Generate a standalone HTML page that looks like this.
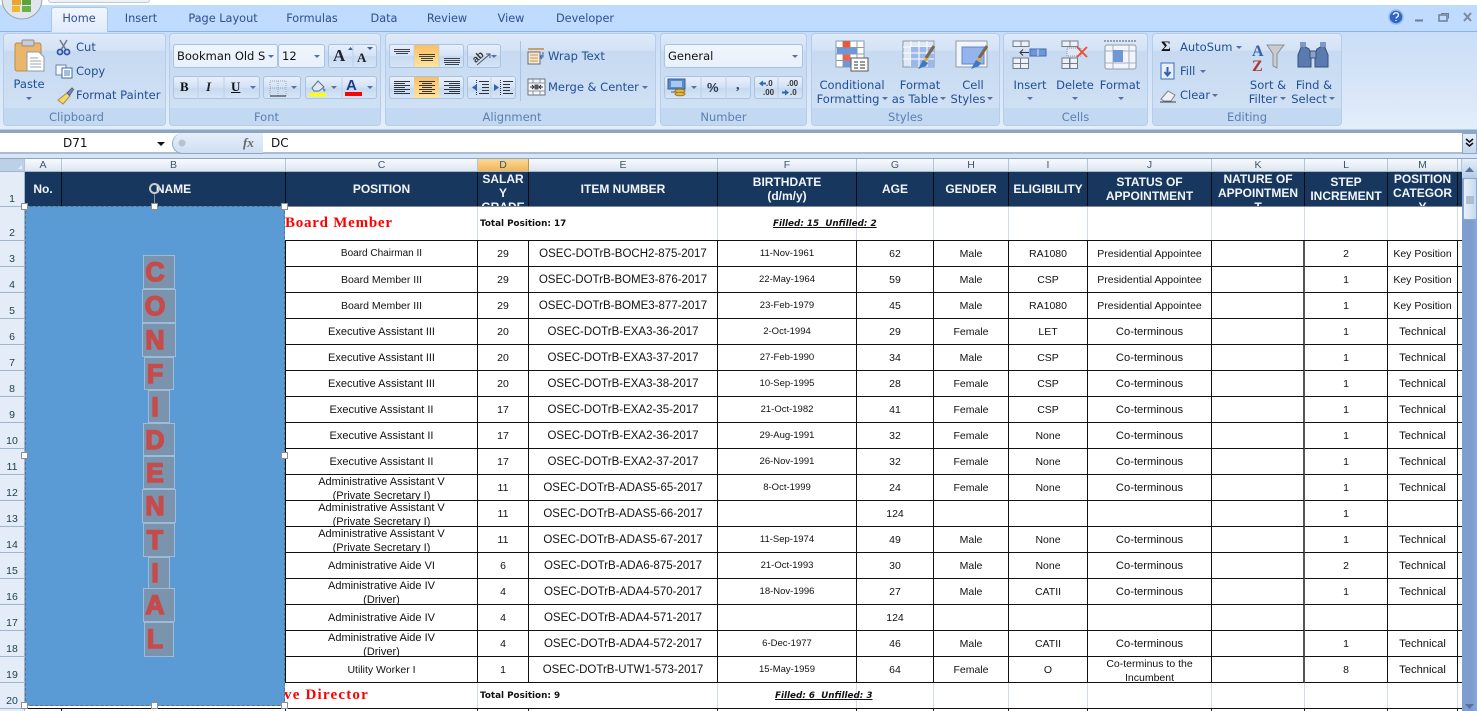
<!DOCTYPE html>
<html><head><meta charset="utf-8"><title>Excel</title>
<style>
*{box-sizing:border-box}
html,body{margin:0;padding:0;width:1477px;height:711px;overflow:hidden;background:#fff;font-family:"Liberation Sans",sans-serif}
.a{position:absolute}
#rb{position:absolute;left:0;top:31px;width:1477px;height:99px;background:linear-gradient(#c9def7,#dbe8f8 70%,#e3eefa);border-top:1px solid #8db2e3;border-bottom:1px solid #b4cbe6}
.g{position:absolute;top:33px;height:93px;border:1px solid #b5cde8;border-radius:4px;background:linear-gradient(#dfeafa 0,#d3e2f5 18%,#c7daf1 19%,#cfe0f4 80%)}
.g:after{content:"";position:absolute;left:0;right:0;bottom:0;height:17px;background:#c2d9f1;border-radius:0 0 3px 3px}
.g span{position:absolute;z-index:2;left:0;right:0;bottom:0;height:17px;text-align:center;font:11.5px/18px "DejaVu Sans",sans-serif;color:#5a7fb0}
.t{position:absolute;font:11.5px/14px "DejaVu Sans",sans-serif;color:#1f4f94;white-space:nowrap}
.c{text-align:center;transform:translateX(-50%)}
.tab{position:absolute;top:12px;font:11.3px/14px "DejaVu Sans",sans-serif;color:#2f4f8f;transform:translateX(-50%);white-space:nowrap}
.bx{position:absolute;border:1px solid #a9c3e2;border-radius:3px;background:linear-gradient(#e8f0fb,#d3e2f5 50%,#c6d9f0 52%,#d6e5f6)}
.w{background:linear-gradient(#f0f5fc,#e8f0fa);}
.hl{position:absolute;background:linear-gradient(#f9bd68,#fdd27f 50%,#ffe49e)}
.cl{position:absolute;top:159px;height:13px;background:linear-gradient(#f8fafd,#dfe6f0);border-right:1px solid #b0c4dc;border-bottom:1px solid #9eb6ce;font:10.5px/13px "Liberation Sans",sans-serif;color:#3e5570;text-align:center}
.rn{position:absolute;left:0;width:25px;background:#e4ecf7;border-bottom:1px solid #9eb6ce;border-right:1px solid #9eb6ce;font:10.5px/14px "Liberation Sans",sans-serif;color:#24404f;text-align:center;display:flex;align-items:flex-end;justify-content:center}
.r{position:absolute;left:285px;display:grid;grid-template-columns:192px 51px 189px 139px 77px 75px 79px 124px 93px 83px 70px 4px;height:26px;border-left:1px solid #111}
.r span{display:flex;align-items:center;justify-content:center;text-align:center;overflow:hidden;height:26px;padding-top:1px;border-right:1px solid #111;border-bottom:1px solid #111;font-size:10.5px;line-height:14px;color:#111;white-space:nowrap}
.r span:nth-child(3){font-size:11.5px}
.r span:nth-child(4){font-size:9.5px}
.r span:nth-child(9){border-right:2px solid #555}
.r span:last-child{border-right:0}
.r span.o{align-items:flex-start;padding-top:0}
.r span.k{font-size:11.2px}
.r span.x{font-size:11px}
.r span.m{font-size:10px}
.hd{position:absolute;top:172px;height:34px;background:#17375e;color:#f2f5f9;font:bold 12px/14px "Liberation Sans",sans-serif;text-align:center;overflow:hidden;border-right:1px solid #060a12;display:flex;align-items:center;justify-content:center;white-space:nowrap}
.hd.o{align-items:flex-start}
.gl{position:absolute;top:207px;width:1px;height:33px;background:#d3dcea}
.tp{position:absolute;font:bold 8.8px/12px "DejaVu Sans",sans-serif;color:#111;white-space:nowrap}
.fl{position:absolute;font:italic bold 8.8px/12px "DejaVu Sans",sans-serif;color:#111;text-decoration:underline;white-space:pre}
.rd{position:absolute;font:bold 15px/18px "Liberation Serif",serif;letter-spacing:.75px;color:#f00;white-space:nowrap}
#sh{position:absolute;left:25px;top:206px;width:260px;height:500px;background:#5b9bd5;border:1px dashed #5a6f88}
.lt{position:absolute;background:#7a94ae;border:1px solid #9dbcdc}
.lg{position:absolute;left:115px;width:80px;text-align:center;font:bold 26.500px/34px "Liberation Sans",sans-serif;color:#c64b4b;-webkit-text-stroke:1.500px #c64b4b}
.hn{position:absolute;width:7px;height:7px;background:#fff;border:1px solid #8a8f96}
</style></head><body>

<!-- title strip + tabs -->
<div class="a" style="left:0;top:5px;width:1477px;height:26px;background:#bfdbff"></div>
<div class="a" style="left:48px;top:0;width:102px;height:3px;background:#eef3fa;border:1px solid #c2c8d0;border-top:0;border-radius:0 0 4px 4px"></div>
<div class="a" style="left:51px;top:7px;width:57px;height:25px;background:linear-gradient(#f2f7fe,#dfeafa);border:1px solid #a9c7ec;border-bottom:0;border-radius:3px 3px 0 0;z-index:3"></div>
<div class="tab" style="left:79px;z-index:4">Home</div>
<div class="tab" style="left:141px">Insert</div>
<div class="tab" style="left:223px">Page Layout</div>
<div class="tab" style="left:312px">Formulas</div>
<div class="tab" style="left:384px">Data</div>
<div class="tab" style="left:447px">Review</div>
<div class="tab" style="left:511px">View</div>
<div class="tab" style="left:585px">Developer</div>

<div id="rb"></div>
<div class="g" style="left:3px;width:163px"><span style="width:145px">Clipboard</span></div>
<div class="g" style="left:169px;width:212px"><span style="width:193px">Font</span></div>
<div class="g" style="left:385px;width:271px"><span style="width:252px">Alignment</span></div>
<div class="g" style="left:660px;width:147px"><span style="width:125px">Number</span></div>
<div class="g" style="left:811px;width:189px"><span>Styles</span></div>
<div class="g" style="left:1003px;width:145px"><span>Cells</span></div>
<div class="g" style="left:1152px;width:190px"><span>Editing</span></div>

<!-- controls -->
<div class="bx w" style="left:173px;top:44px;width:105px;height:24px"></div>
<div class="bx w" style="left:278px;top:44px;width:47px;height:24px"></div>
<div class="bx" style="left:328px;top:44px;width:49px;height:24px"></div>
<div class="bx" style="left:173px;top:76px;width:87px;height:23px"></div>
<div class="bx" style="left:263px;top:76px;width:38px;height:23px"></div>
<div class="bx" style="left:305px;top:76px;width:72px;height:23px"></div>
<div class="bx" style="left:389px;top:44px;width:75px;height:24px"></div>
<div class="hl" style="left:414px;top:45px;width:25px;height:22px"></div>
<div class="bx" style="left:467px;top:44px;width:34px;height:24px"></div>
<div class="bx" style="left:389px;top:76px;width:75px;height:23px"></div>
<div class="hl" style="left:414px;top:77px;width:25px;height:21px"></div>
<div class="bx" style="left:467px;top:76px;width:49px;height:23px"></div>
<div class="a" style="left:520px;top:41px;width:1px;height:60px;background:#a9c3e2"></div>
<div class="bx w" style="left:664px;top:44px;width:139px;height:24px"></div>
<div class="bx" style="left:664px;top:76px;width:87px;height:23px"></div>
<div class="bx" style="left:754px;top:76px;width:49px;height:23px"></div>

<div class="t" style="left:76px;top:40px">Cut</div>
<div class="t" style="left:76px;top:64px">Copy</div>
<div class="t" style="left:76px;top:88px">Format Painter</div>
<div class="t c" style="left:29px;top:77px">Paste</div>
<div class="t" style="left:177px;top:49px;color:#111">Bookman Old S</div>
<div class="t" style="left:282px;top:49px;color:#111">12</div>
<div class="a" style="left:333px;top:46px;font:bold 17px/20px 'Liberation Serif',serif;color:#223">A</div>
<div class="a" style="left:357px;top:49px;font:bold 13px/18px 'Liberation Serif',serif;color:#223">A</div>
<div class="a" style="left:180px;top:79px;font:bold 13px/16px 'Liberation Serif',serif;color:#111">B</div>
<div class="a" style="left:206px;top:79px;font:italic bold 13px/16px 'Liberation Serif',serif;color:#222">I</div>
<div class="a" style="left:231px;top:79px;font:bold 13px/16px 'Liberation Serif',serif;color:#111;text-decoration:underline">U</div>
<div class="a" style="left:346px;top:78px;font:bold 15px/16px 'Liberation Sans',sans-serif;color:#1c3d8f">A</div>
<div class="t" style="left:548px;top:49px">Wrap Text</div>
<div class="t" style="left:548px;top:80px">Merge &amp; Center</div>
<div class="t" style="left:668px;top:49px;color:#111">General</div>
<div class="a" style="left:707px;top:80px;font:bold 13px/16px 'Liberation Sans',sans-serif;color:#2a3a50">%</div>
<div class="a" style="left:736px;top:78px;font:bold 14px/16px 'Liberation Serif',serif;color:#2a3a50">,</div>
<div class="t c" style="left:852px;top:78px">Conditional</div>
<div class="t c" style="left:848px;top:92px">Formatting</div>
<div class="t c" style="left:920px;top:78px">Format</div>
<div class="t c" style="left:915px;top:92px">as Table</div>
<div class="t c" style="left:973px;top:78px">Cell</div>
<div class="t c" style="left:968px;top:92px">Styles</div>
<div class="t c" style="left:1030px;top:78px">Insert</div>
<div class="t c" style="left:1075px;top:78px">Delete</div>
<div class="t c" style="left:1120px;top:78px">Format</div>
<div class="t" style="left:1180px;top:40px">AutoSum</div>
<div class="t" style="left:1180px;top:64px">Fill</div>
<div class="t" style="left:1180px;top:88px">Clear</div>
<div class="t c" style="left:1268px;top:78px">Sort &amp;</div>
<div class="t c" style="left:1263px;top:92px">Filter</div>
<div class="t c" style="left:1314px;top:78px">Find &amp;</div>
<div class="t c" style="left:1309px;top:92px">Select</div>
<div class="a" style="left:1161px;top:38px;font:bold 15px/18px 'Liberation Serif',serif;color:#111">&#931;</div>

<!-- formula bar -->
<div class="a" style="left:0;top:130px;width:1477px;height:3px;background:#8ea6c6"></div>
<div class="a" style="left:0;top:133px;width:1477px;height:21px;background:#fff;border-bottom:2px solid #a9bdd6"></div>
<div class="a" style="left:172px;top:133px;width:91px;height:21px;background:linear-gradient(#e6eff9,#cfdff2);border-radius:11px 0 0 11px;border-left:1px solid #8ea6c6;border-bottom:1px solid #8ea6c6"></div>
<div class="a" style="left:63px;top:136px;font:12px/15px 'DejaVu Sans',sans-serif;color:#111">D71</div>
<div class="a" style="left:271px;top:136px;font:12px/15px 'DejaVu Sans',sans-serif;color:#111">DC</div>
<div class="a" style="left:243px;top:135px;font:italic bold 13px/16px 'Liberation Serif',serif;color:#666">fx</div>
<div class="a" style="left:1462px;top:133px;width:15px;height:21px;background:linear-gradient(#e6eff9,#c3d7ee);border:1px solid #8ea6c6"></div>
<div class="a" style="left:0;top:154px;width:1477px;height:5px;background:#d9e5f4;border-bottom:1px solid #8ea6c6"></div>

<!-- column heads -->
<div class="cl" style="left:0;width:25px;background:#bcd0e8"></div>
<div class="cl" style="left:25px;width:37px">A</div>
<div class="cl" style="left:62px;width:224px">B</div>
<div class="cl" style="left:286px;width:192px">C</div>
<div class="cl" style="left:478px;width:51px;background:linear-gradient(#f9d99a,#f3b654);border-right-color:#c9963e">D</div>
<div class="cl" style="left:529px;width:189px">E</div>
<div class="cl" style="left:718px;width:139px">F</div>
<div class="cl" style="left:857px;width:77px">G</div>
<div class="cl" style="left:934px;width:75px">H</div>
<div class="cl" style="left:1009px;width:79px">I</div>
<div class="cl" style="left:1088px;width:124px">J</div>
<div class="cl" style="left:1212px;width:93px">K</div>
<div class="cl" style="left:1305px;width:83px">L</div>
<div class="cl" style="left:1388px;width:70px">M</div>
<div class="cl" style="left:1458px;width:4px"></div>

<!-- row numbers -->
<div class="rn" style="top:172px;height:35px">1</div>
<div class="rn" style="top:207px;height:34px">2</div>
<div class="rn" style="top:241px;height:26px">3</div>
<div class="rn" style="top:267px;height:26px">4</div>
<div class="rn" style="top:293px;height:26px">5</div>
<div class="rn" style="top:319px;height:26px">6</div>
<div class="rn" style="top:345px;height:26px">7</div>
<div class="rn" style="top:371px;height:26px">8</div>
<div class="rn" style="top:397px;height:26px">9</div>
<div class="rn" style="top:423px;height:26px">10</div>
<div class="rn" style="top:449px;height:26px">11</div>
<div class="rn" style="top:475px;height:26px">12</div>
<div class="rn" style="top:501px;height:26px">13</div>
<div class="rn" style="top:527px;height:26px">14</div>
<div class="rn" style="top:553px;height:26px">15</div>
<div class="rn" style="top:579px;height:26px">16</div>
<div class="rn" style="top:605px;height:26px">17</div>
<div class="rn" style="top:631px;height:26px">18</div>
<div class="rn" style="top:657px;height:26px">19</div>
<div class="rn" style="top:683px;height:26px">20</div>
<div class="rn" style="top:709px;height:2px;border:0;border-right:1px solid #9eb6ce"></div>

<!-- header row -->
<div class="hd" style="left:25px;width:37px">No.</div>
<div class="hd" style="left:62px;width:224px">NAME</div>
<div class="hd" style="left:286px;width:192px">POSITION</div>
<div class="hd o" style="left:478px;width:51px">SALAR<br>Y<br>GRADE</div>
<div class="hd" style="left:529px;width:189px">ITEM NUMBER</div>
<div class="hd" style="left:718px;width:139px">BIRTHDATE<br>(d/m/y)</div>
<div class="hd" style="left:857px;width:77px">AGE</div>
<div class="hd" style="left:934px;width:75px">GENDER</div>
<div class="hd" style="left:1009px;width:79px">ELIGIBILITY</div>
<div class="hd" style="left:1088px;width:124px">STATUS OF<br>APPOINTMENT</div>
<div class="hd o" style="left:1212px;width:93px">NATURE OF<br>APPOINTMEN<br>T</div>
<div class="hd" style="left:1305px;width:83px">STEP<br>INCREMENT</div>
<div class="hd o" style="left:1388px;width:70px">POSITION<br>CATEGOR<br>Y</div>
<div class="hd" style="left:1458px;width:4px;border:0"></div>
<div class="a" style="left:25px;top:206px;width:1437px;height:1px;background:#7f8792"></div>

<!-- row 2 -->
<div class="gl" style="left:477px"></div><div class="gl" style="left:717px"></div><div class="gl" style="left:856px"></div><div class="gl" style="left:933px"></div><div class="gl" style="left:1008px"></div><div class="gl" style="left:1087px"></div><div class="gl" style="left:1211px"></div><div class="gl" style="left:1304px"></div><div class="gl" style="left:1387px"></div><div class="gl" style="left:1457px"></div>
<div class="a" style="left:285px;top:240px;width:1177px;height:1px;background:#111"></div>
<div class="rd" style="left:285px;top:214px">Board Member</div>
<div class="tp" style="left:480px;top:218px">Total Position: 17</div>
<div class="fl" style="left:773px;top:218px">Filled: 15  Unfilled: 2</div>

<!-- data rows -->
<div class="r" style="top:241px"><span class="m">Board Chairman II</span><span>29</span><span>OSEC-DOTrB-BOCH2-875-2017</span><span>11-Nov-1961</span><span>62</span><span>Male</span><span>RA1080</span><span>Presidential Appointee</span><span></span><span>2</span><span>Key Position</span><span></span></div>
<div class="r" style="top:267px"><span>Board Member III</span><span>29</span><span>OSEC-DOTrB-BOME3-876-2017</span><span>22-May-1964</span><span>59</span><span>Male</span><span>CSP</span><span>Presidential Appointee</span><span></span><span>1</span><span>Key Position</span><span></span></div>
<div class="r" style="top:293px"><span>Board Member III</span><span>29</span><span>OSEC-DOTrB-BOME3-877-2017</span><span>23-Feb-1979</span><span>45</span><span>Male</span><span>RA1080</span><span>Presidential Appointee</span><span></span><span>1</span><span>Key Position</span><span></span></div>
<div class="r" style="top:319px"><span class="x">Executive Assistant III</span><span>20</span><span>OSEC-DOTrB-EXA3-36-2017</span><span>2-Oct-1994</span><span>29</span><span>Female</span><span>LET</span><span class="k">Co-terminous</span><span></span><span>1</span><span class="k">Technical</span><span></span></div>
<div class="r" style="top:345px"><span class="x">Executive Assistant III</span><span>20</span><span>OSEC-DOTrB-EXA3-37-2017</span><span>27-Feb-1990</span><span>34</span><span>Male</span><span>CSP</span><span class="k">Co-terminous</span><span></span><span>1</span><span class="k">Technical</span><span></span></div>
<div class="r" style="top:371px"><span class="x">Executive Assistant III</span><span>20</span><span>OSEC-DOTrB-EXA3-38-2017</span><span>10-Sep-1995</span><span>28</span><span>Female</span><span>CSP</span><span class="k">Co-terminous</span><span></span><span>1</span><span class="k">Technical</span><span></span></div>
<div class="r" style="top:397px"><span class="x">Executive Assistant II</span><span>17</span><span>OSEC-DOTrB-EXA2-35-2017</span><span>21-Oct-1982</span><span>41</span><span>Female</span><span>CSP</span><span class="k">Co-terminous</span><span></span><span>1</span><span class="k">Technical</span><span></span></div>
<div class="r" style="top:423px"><span class="x">Executive Assistant II</span><span>17</span><span>OSEC-DOTrB-EXA2-36-2017</span><span>29-Aug-1991</span><span>32</span><span>Female</span><span>None</span><span class="k">Co-terminous</span><span></span><span>1</span><span class="k">Technical</span><span></span></div>
<div class="r" style="top:449px"><span class="x">Executive Assistant II</span><span>17</span><span>OSEC-DOTrB-EXA2-37-2017</span><span>26-Nov-1991</span><span>32</span><span>Female</span><span>None</span><span class="k">Co-terminous</span><span></span><span>1</span><span class="k">Technical</span><span></span></div>
<div class="r" style="top:475px"><span class="o x">Administrative Assistant V<br>(Private Secretary I)</span><span>11</span><span>OSEC-DOTrB-ADAS5-65-2017</span><span>8-Oct-1999</span><span>24</span><span>Female</span><span>None</span><span class="k">Co-terminous</span><span></span><span>1</span><span class="k">Technical</span><span></span></div>
<div class="r" style="top:501px"><span class="o x">Administrative Assistant V<br>(Private Secretary I)</span><span>11</span><span>OSEC-DOTrB-ADAS5-66-2017</span><span></span><span>124</span><span></span><span></span><span></span><span></span><span>1</span><span></span><span></span></div>
<div class="r" style="top:527px"><span class="o x">Administrative Assistant V<br>(Private Secretary I)</span><span>11</span><span>OSEC-DOTrB-ADAS5-67-2017</span><span>11-Sep-1974</span><span>49</span><span>Male</span><span>None</span><span class="k">Co-terminous</span><span></span><span>1</span><span class="k">Technical</span><span></span></div>
<div class="r" style="top:553px"><span class="x">Administrative Aide VI</span><span>6</span><span>OSEC-DOTrB-ADA6-875-2017</span><span>21-Oct-1993</span><span>30</span><span>Male</span><span>None</span><span class="k">Co-terminous</span><span></span><span>2</span><span class="k">Technical</span><span></span></div>
<div class="r" style="top:579px"><span class="o x">Administrative Aide IV<br>(Driver)</span><span>4</span><span>OSEC-DOTrB-ADA4-570-2017</span><span>18-Nov-1996</span><span>27</span><span>Male</span><span>CATII</span><span class="k">Co-terminous</span><span></span><span>1</span><span class="k">Technical</span><span></span></div>
<div class="r" style="top:605px"><span class="x">Administrative Aide IV</span><span>4</span><span>OSEC-DOTrB-ADA4-571-2017</span><span></span><span>124</span><span></span><span></span><span></span><span></span><span></span><span></span><span></span></div>
<div class="r" style="top:631px"><span class="o x">Administrative Aide IV<br>(Driver)</span><span>4</span><span>OSEC-DOTrB-ADA4-572-2017</span><span>6-Dec-1977</span><span>46</span><span>Male</span><span>CATII</span><span class="k">Co-terminous</span><span></span><span>1</span><span class="k">Technical</span><span></span></div>
<div class="r" style="top:657px"><span>Utility Worker I</span><span>1</span><span>OSEC-DOTrB-UTW1-573-2017</span><span>15-May-1959</span><span>64</span><span>Female</span><span>O</span><span class="o">Co-terminus to the<br>Incumbent</span><span></span><span>8</span><span class="k">Technical</span><span></span></div>

<!-- row 20 -->
<div class="gl" style="left:477px;top:683px;height:25px"></div><div class="gl" style="left:717px;top:683px;height:25px"></div><div class="gl" style="left:856px;top:683px;height:25px"></div><div class="gl" style="left:933px;top:683px;height:25px"></div><div class="gl" style="left:1008px;top:683px;height:25px"></div><div class="gl" style="left:1087px;top:683px;height:25px"></div><div class="gl" style="left:1211px;top:683px;height:25px"></div><div class="gl" style="left:1304px;top:683px;height:25px"></div><div class="gl" style="left:1387px;top:683px;height:25px"></div><div class="gl" style="left:1457px;top:683px;height:25px"></div>
<div class="a" style="left:25px;top:708px;width:1437px;height:1px;background:#111"></div>
<div class="rd" style="left:200px;width:169px;text-align:right;top:686px;letter-spacing:1.2px">Executive Director</div>
<div class="tp" style="left:480px;top:690px">Total Position: 9</div>
<div class="fl" style="left:775px;top:690px">Filled: 6  Unfilled: 3</div>
<div class="a" style="left:61px;top:709px;width:1px;height:2px;background:#222"></div>
<div class="a" style="left:285px;top:709px;width:1px;height:2px;background:#222"></div>
<div class="a" style="left:477px;top:709px;width:1px;height:2px;background:#222"></div>
<div class="a" style="left:528px;top:709px;width:1px;height:2px;background:#222"></div>
<div class="a" style="left:717px;top:709px;width:1px;height:2px;background:#222"></div>
<div class="a" style="left:856px;top:709px;width:1px;height:2px;background:#222"></div>
<div class="a" style="left:933px;top:709px;width:1px;height:2px;background:#222"></div>
<div class="a" style="left:1008px;top:709px;width:1px;height:2px;background:#222"></div>
<div class="a" style="left:1087px;top:709px;width:1px;height:2px;background:#222"></div>
<div class="a" style="left:1211px;top:709px;width:1px;height:2px;background:#222"></div>
<div class="a" style="left:1304px;top:709px;width:1px;height:2px;background:#222"></div>
<div class="a" style="left:1387px;top:709px;width:1px;height:2px;background:#222"></div>
<div class="a" style="left:1457px;top:709px;width:1px;height:2px;background:#222"></div>

<!-- scrollbar -->
<div class="a" style="left:1462px;top:159px;width:15px;height:552px;background:linear-gradient(90deg,#7f9fd0,#7b9ccd 60%,#8aa8d6)"></div>
<div class="a" style="left:1462px;top:159px;width:15px;height:19px;background:linear-gradient(#e6eff9,#b5cbe8)"></div>
<div class="a" style="left:1463px;top:178px;width:14px;height:42px;background:linear-gradient(90deg,#e9f1fb,#c6d8ef);border:1px solid #8ea6c6;border-radius:2px"></div>

<!-- shape -->
<div id="sh"></div>
<div class="lt" style="left:143px;top:255px;width:32px;height:34px"></div>
<div class="lt" style="left:142px;top:289px;width:34px;height:34px"></div>
<div class="lt" style="left:142px;top:323px;width:34px;height:34px"></div>
<div class="lt" style="left:144px;top:357px;width:30px;height:33px"></div>
<div class="lt" style="left:148px;top:390px;width:22px;height:33px"></div>
<div class="lt" style="left:143px;top:423px;width:32px;height:33px"></div>
<div class="lt" style="left:143px;top:456px;width:32px;height:33px"></div>
<div class="lt" style="left:142px;top:489px;width:34px;height:34px"></div>
<div class="lt" style="left:143px;top:523px;width:32px;height:34px"></div>
<div class="lt" style="left:148px;top:557px;width:22px;height:32px"></div>
<div class="lt" style="left:143px;top:588px;width:32px;height:34px"></div>
<div class="lt" style="left:144px;top:622px;width:30px;height:35px"></div>
<div class="lg" style="top:255px">C</div>
<div class="lg" style="top:289px">O</div>
<div class="lg" style="top:323px">N</div>
<div class="lg" style="top:357px">F</div>
<div class="lg" style="top:390px">I</div>
<div class="lg" style="top:423px">D</div>
<div class="lg" style="top:456px">E</div>
<div class="lg" style="top:489px">N</div>
<div class="lg" style="top:523px">T</div>
<div class="lg" style="top:556px">I</div>
<div class="lg" style="top:588px">A</div>
<div class="lg" style="top:622px">L</div>
<div class="a" style="left:154px;top:193px;width:1px;height:13px;background:#8a8f96"></div>
<div class="a" style="left:149px;top:183px;width:11px;height:11px;border:2px solid #c8ccd0;border-radius:50%;background:transparent"></div>
<div class="hn" style="left:21px;top:203px"></div><div class="hn" style="left:151px;top:203px"></div><div class="hn" style="left:281px;top:203px"></div>
<div class="hn" style="left:21px;top:452px"></div><div class="hn" style="left:281px;top:452px"></div>
<div class="hn" style="left:21px;top:702px"></div><div class="hn" style="left:151px;top:702px"></div><div class="hn" style="left:281px;top:702px"></div>

<!-- icon overlay -->
<svg class="a" style="left:0;top:0" width="1477" height="711" viewBox="0 0 1477 711">
<defs><path id="d" d="M-3 0h6l-3 3z" fill="#54719f"/></defs>
<!-- office button -->
<circle cx="22" cy="-1" r="20" fill="#dfe6ee" stroke="#9aa6b4"/>
<rect x="12" y="0" width="9" height="5" fill="#e9a62a"/><rect x="22" y="0" width="9" height="5" fill="#5da33c"/><rect x="12" y="6" width="8" height="6" fill="#f2b62e"/><rect x="22" y="6" width="9" height="6" fill="#6cb04a"/>
<!-- window controls -->
<circle cx="1396" cy="17" r="7" fill="#2f66c8" stroke="#9dbbe6" stroke-width="1.5"/><path d="M1393.5 15c0-3 5-3 5 0 0 2-2.500 2-2.500 3.500M1396 20v1" stroke="#fff" stroke-width="1.300" fill="none"/>
<path d="M1415 20.500h8" stroke="#6e7f95" stroke-width="2"/>
<rect x="1439" y="15" width="8" height="6" fill="none" stroke="#6e7f95" stroke-width="1.500"/><path d="M1441 13.500h7.500v5" stroke="#6e7f95" fill="none"/>
<path d="M1464 13l7 8M1471 13l-7 8" stroke="#7b8a9c" stroke-width="2"/>
<!-- paste -->
<rect x="15" y="43" width="26" height="28" rx="2" fill="#e9b66c" stroke="#b98d4a"/><rect x="22" y="40" width="12" height="6" rx="1" fill="#c9ccd2" stroke="#8a8f96"/>
<path d="M27 52h12l5 5v14H27z" fill="#fff" stroke="#8f9bab"/><path d="M30 58h8M30 61h11M30 64h11M30 67h11" stroke="#98a4b4"/>
<use href="#d" x="29" y="97"/>
<!-- scissors -->
<path d="M60 40l6 10M67 40l-6 10" stroke="#6f7a88" stroke-width="1.500"/><circle cx="60" cy="52" r="2.500" fill="none" stroke="#2d55a8" stroke-width="1.800"/><circle cx="67" cy="52" r="2.500" fill="none" stroke="#2d55a8" stroke-width="1.800"/>
<!-- copy -->
<rect x="56" y="65" width="10" height="10" fill="#f4f7fb" stroke="#6d85a8"/><rect x="62" y="68" width="10" height="10" fill="#fff" stroke="#3e6aaa"/><path d="M64 71h6M64 73h6M64 75h6" stroke="#4a7ac0"/>
<!-- painter -->
<path d="M58 100l9-7 3 3-7 8z" fill="#f1d873" stroke="#a98f3a"/><path d="M67 93l5-5 1.500 1.500-4 6z" fill="#7c8cb4" stroke="#55607e"/>
<!-- dropdowns font -->
<use href="#d" x="271" y="55"/><use href="#d" x="317" y="55"/>
<path d="M348 50h5l-2.500-3zM367 47h6l-3 3z" fill="#3f5f95"/>
<path d="M198 76v23M224 76v23" stroke="#bdd0e6"/><use href="#d" x="253" y="86"/>
<rect x="270" y="81" width="16" height="15" fill="none" stroke="#9aa6b6" stroke-dasharray="1 1"/><path d="M278 81v15M270 88h16" stroke="#9aa6b6" stroke-dasharray="1 1"/><path d="M270 96h16" stroke="#222"/><use href="#d" x="294" y="86"/>
<path d="M312 88l6-7 6 6-5 4h-5z" fill="#dfe8f2" stroke="#5f7088"/><path d="M322 87l2 5 2-2z" fill="#5a84c8"/><rect x="309" y="93" width="17" height="3.500" fill="#ffff00"/><use href="#d" x="334" y="86"/>
<rect x="345" y="92" width="17" height="4" fill="#f00"/><use href="#d" x="370" y="86"/><path d="M342 76v23" stroke="#bdd0e6"/><path d="M353 44v24" stroke="#bdd0e6"/>
<!-- align top row -->
<g stroke="#3a3f48" fill="none"><path d="M394 49.500h16M394 51.500h16M396 53.500h12"/><path d="M419 54.500h16M419 56.500h16M421 58.500h12M421 60.500h12"/><path d="M444 58.500h16M444 60.500h16M444 62.500h16M445 64.500h14"/></g>
<!-- align second row -->
<g stroke="#2f343c" fill="none"><path d="M394 81.500h16M394 83.500h11M394 85.500h16M394 87.500h11M394 89.500h16M394 91.500h11M394 93.500h16"/><path d="M419 81.500h16M422 83.500h10M419 85.500h16M422 87.500h10M419 89.500h16M422 91.500h10M419 93.500h16"/><path d="M444 81.500h16M449 83.500h11M444 85.500h16M449 87.500h11M444 89.500h16M449 91.500h11M444 93.500h16"/></g>
<path d="M389.500 44v24M439 44v24M414 44v24" stroke="#b8cce4" opacity=".6"/>
<!-- orientation -->
<text x="473" y="62" font-family="Liberation Sans" font-weight="bold" font-size="10" fill="#333" transform="rotate(-42 476 59)">ab</text><path d="M477 65l13-11m-4 0h4v4" stroke="#556" fill="none"/><use href="#d" x="494" y="55"/>
<!-- indent -->
<path d="M491 76v23" stroke="#bdd0e6"/>
<g stroke="#2f343c"><path d="M479 81.500h10M482 84.500h7M482 87.500h7M482 90.500h7M479 93.500h10"/><path d="M503 81.500h10M503 84.500h7M503 87.500h7M503 90.500h7M503 93.500h10"/><path d="M500.500 80v15M476.500 80v15" stroke-dasharray="1 1"/></g>
<path d="M472 87.500l5-3.500v7zM499 87.500l-5-3.500v7z" fill="#2e65b5"/>
<!-- wrap -->
<rect x="528" y="52" width="12" height="12" fill="#f5ebd8" stroke="#6a6a6a"/><path d="M530 55h8M530 58h8M530 61h8" stroke="#c69240"/><path d="M528 49h16" stroke="#c58a3a" stroke-width="1.500"/><path d="M543 52v5h-3m2-2l-2 2 2 2" stroke="#3a66a8" fill="none"/>
<!-- merge -->
<rect x="528" y="79" width="17" height="16" fill="#f6f8fb" stroke="#6a7280"/><path d="M528 83h17M528 91h17M533 79v4M540 79v4M533 91v4M540 91v4" stroke="#8a93a2"/><path d="M530 87h4m-2-2l2 2-2 2M543 87h-4m2-2l-2 2 2 2" stroke="#333" fill="none"/><rect x="534.500" y="84.500" width="4" height="5" fill="#556"/>
<use href="#d" x="645" y="86"/>
<use href="#d" x="795" y="55"/>
<!-- currency -->
<rect x="668" y="79" width="17" height="10" fill="#5a8ad0" stroke="#3d5f94"/><rect x="671" y="81" width="11" height="6" fill="#a8c8ee"/><ellipse cx="680" cy="91" rx="5" ry="1.800" fill="#e5b93e" stroke="#9a7a20"/><ellipse cx="680" cy="94" rx="5" ry="1.800" fill="#e5b93e" stroke="#9a7a20"/><path d="M671 92h4" stroke="#555"/>
<use href="#d" x="694" y="86"/><path d="M701 76v23M726 76v23M778 76v23" stroke="#bdd0e6"/>
<!-- decimals -->
<g font-family="Liberation Sans" font-size="8" font-weight="bold" fill="#333"><text x="766" y="86">.0</text><text x="763" y="95">.00</text><text x="787" y="86">.00</text><text x="790" y="95">.0</text></g>
<path d="M759 83.500l4-3v2h3v2h-3v2zM789 92.500l-4-3v2h-3v2h3v2z" fill="#3068b8"/>
<!-- cond format -->
<g stroke="#8d9aa8"><rect x="836" y="41" width="28" height="26" fill="#fff"/><path d="M836 47.500h28M836 54h28M836 60.500h28M843 41v26M850 41v26M857 41v26" fill="none"/></g>
<rect x="843" y="41" width="7" height="6.500" fill="#e8573e"/><rect x="837" y="48" width="20" height="6" fill="#6f97d8"/><rect x="843" y="54.500" width="7" height="6" fill="#f0604a"/><rect x="843" y="61" width="7" height="6" fill="#6f97d8"/>
<rect x="851" y="58" width="17" height="13" fill="#fff" stroke="#556"/><path d="M854 62h4M854 65h4M854 68h4M860 62h5M860 65h5M860 68h5" stroke="#333"/>
<!-- format table -->
<g stroke="#8d9aa8"><rect x="903" y="41" width="31" height="26" fill="#dfe8f7"/><path d="M903 47h31M903 53h31M903 59h31M911 41v26M919 41v26M927 41v26" fill="none" stroke="#fff"/></g><rect x="911" y="47" width="23" height="20" fill="#9cb8ea"/><path d="M911 53h23M911 59h23M919 47v20M927 47v20" stroke="#fff"/>
<path d="M934 46l-8 12" stroke="#7a6a4a" stroke-width="3"/><path d="M926 58l-3 2 3 2 3-4z" fill="#d9a84a"/><path d="M923 60l-5 9 8-3 2-3z" fill="#3e78c8"/>
<!-- cell style -->
<rect x="956" y="41" width="31" height="26" fill="#f2f6fc" stroke="#8d9aa8"/><rect x="962" y="47" width="22" height="17" fill="#94b4ec" stroke="#5f85c8"/>
<path d="M987 46l-8 12" stroke="#7a6a4a" stroke-width="3"/><path d="M979 58l-3 2 3 2 3-4z" fill="#d9a84a"/><path d="M976 60l-5 9 8-3 2-3z" fill="#3e78c8"/>
<use href="#d" x="885" y="97"/><use href="#d" x="943" y="97"/><use href="#d" x="990" y="97"/>
<!-- insert -->
<g fill="#eef2f8" stroke="#717d8d"><rect x="1013" y="41" width="8" height="5.500"/><rect x="1021" y="41" width="8" height="5.500"/><rect x="1013" y="58" width="7.500" height="5.500"/><rect x="1020.500" y="58" width="8" height="5.500"/><rect x="1013" y="63.500" width="7.500" height="5"/><rect x="1020.500" y="63.500" width="8" height="5"/></g>
<rect x="1030" y="49" width="16" height="7" fill="#6f97d8" stroke="#3d6cb0"/><path d="M1038 49v7" stroke="#dbe6f8"/><path d="M1029 52.500h-9m3-3l-3 3 3 3" stroke="#333" fill="none"/>
<!-- delete -->
<g fill="#eef2f8" stroke="#717d8d"><rect x="1062" y="41" width="8" height="5.500"/><rect x="1070" y="41" width="8" height="5.500"/><rect x="1062" y="58" width="7.500" height="5.500"/><rect x="1070" y="58" width="7.500" height="5.500"/><rect x="1062" y="63.500" width="7.500" height="5"/><rect x="1070" y="63.500" width="7.500" height="5"/></g>
<rect x="1067" y="48" width="14" height="8" fill="#dfe8f6" stroke="#8a93a2" stroke-dasharray="1 1"/><path d="M1077 47l10 10M1087 47l-10 10" stroke="#ed4a35" stroke-width="1.800"/>
<!-- format cells -->
<path d="M1104 41h32" stroke="#555" stroke-dasharray="2 1"/><rect x="1105" y="45" width="31" height="24" rx="2" fill="#f2f6fc" stroke="#8d9aa8"/><path d="M1113 45v24M1129 45v24M1105 51h31M1105 63h31" stroke="#a5b0bf"/><rect x="1113" y="50" width="10" height="12" fill="#6f97d8"/>
<use href="#d" x="1030" y="97"/><use href="#d" x="1075" y="97"/><use href="#d" x="1121" y="97"/>
<!-- editing -->
<use href="#d" x="1239" y="46"/>
<rect x="1161" y="63" width="13" height="16" fill="#e8effa" stroke="#3c6fb8"/><path d="M1167.500 67v7m-3-2l3 3.500 3-3.500" stroke="#2f5fb0" stroke-width="2" fill="none"/><use href="#d" x="1203" y="70"/>
<path d="M1161 99l7-8 7 4-4 6h-7z" fill="#eef0f3" stroke="#7a8290"/><path d="M1160 102h16" stroke="#444"/><use href="#d" x="1215" y="94"/>
<text x="1252" y="56" font-family="Liberation Serif" font-weight="bold" font-size="16" fill="#3a62aa">A</text><text x="1252" y="71" font-family="Liberation Serif" font-weight="bold" font-size="16" fill="#a83a32">Z</text>
<path d="M1267 45h17l-7 9v14l-4-2V54z" fill="#c9ccd0" stroke="#8c9096"/>
<path d="M1302 45l-4 10v12h13V55l-2-6zM1324 45l4 10v12h-13V55l2-6z" fill="#5b7bb0" stroke="#37507e"/><rect x="1310" y="51" width="6" height="7" fill="#8aa3cc" stroke="#37507e"/><rect x="1300" y="42" width="6" height="5" fill="#7f98c4"/><rect x="1320" y="42" width="6" height="5" fill="#7f98c4"/>
<use href="#d" x="1283" y="97"/><use href="#d" x="1332" y="97"/>
<!-- formula bar -->
<path d="M157 142h8l-4 4z" fill="#111"/>
<circle cx="182" cy="143" r="3.500" fill="#b9c2cc"/>
<path d="M1466 139l3.500 3 3.500-3M1466 143l3.500 3 3.500-3" stroke="#111" stroke-width="1.500" fill="none"/>
<!-- sheet corner + scroll -->
<path d="M22 165v4h-4z" fill="#e8f0fa"/>
<path d="M1465 172h9l-4.500-5z" fill="#5a7199"/>
<path d="M1466 197h8M1466 199h8M1466 201h8M1466 203h8" stroke="#8797ad"/>
<path d="M1465 704h9l-4.500 5z" fill="#5a7199"/>
</svg>
</body></html>
